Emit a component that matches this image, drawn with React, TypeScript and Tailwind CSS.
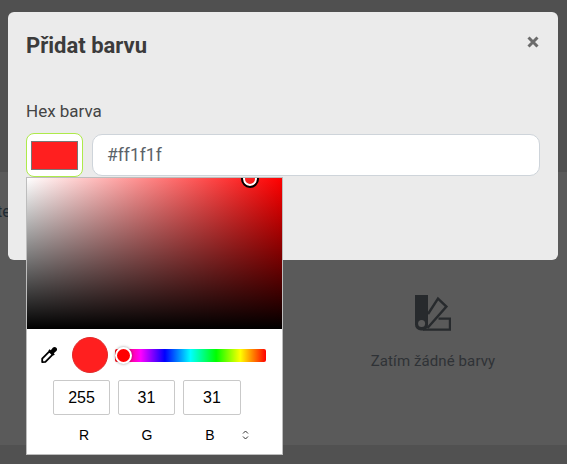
import * as React from 'react';

const SwatchIcon = () => (
    <svg width="36" height="36" viewBox="0 0 36 36" className="block">
        <path d="M0 0H13V29.5C13 33 10.5 35.5 7 35.5H6A6 6 0 0 1 0 29.5Z" fill="#272a2d" />
        <circle cx="6.6" cy="28.4" r="3.5" fill="#5a5a5a" />
        <path d="M13 19L23 3.6L31.4 11.6L12.5 33" fill="none" stroke="#272a2d" strokeWidth="2.4" />
        <path d="M23.5 23.6H35V34.6H8" fill="none" stroke="#272a2d" strokeWidth="2.4" />
    </svg>
);

const Eyedropper = () => (
    <svg width="18" height="18" viewBox="0 0 18 18" className="block">
        <path d="M2.2 12.6L9.4 5.4L12.6 8.6L5.4 15.8L2.2 16.2Z" fill="#fff" stroke="#000" strokeWidth="1.8" strokeLinejoin="round" />
        <path d="M8.4 4.4L9.6 3.2L10.8 4.2L13 1.6C14 .7 15.4.7 16.3 1.7C17.3 2.6 17.3 4 16.4 5L13.8 7.2L14.8 8.4L13.6 9.6Z" fill="#000" />
    </svg>
);

const ChannelBox = ({ value, className }: { value: string; className: string }) => (
    <div className={`h-[35px] flex items-center justify-center border border-[#c9c9c9] rounded-[2px] text-[16px] text-black ${className}`}>
        {value}
    </div>
);

const App: React.FC = () => {
    return (
        <div className="relative w-[567px] h-[464px] overflow-hidden flex flex-col bg-[#5a5a5a] font-['Roboto',sans-serif]">
            <div className="h-[172px] bg-[#505050]" />
            <div className="flex-1 flex">
                <div className="w-[283px] shrink-0 pt-[31px] text-[16px] leading-[18px] text-[#1f2a33] [text-indent:-3px]">te</div>
                <div className="w-[300px] shrink-0 flex flex-col items-center pt-[123px]">
                    <SwatchIcon />
                    <div className="mt-[20px] text-[15px] leading-[20px] text-[#2f3236] tracking-[0.1px]">Zatím žádné barvy</div>
                </div>
            </div>
            <div className="h-[19px] bg-[#515151]" />

            <div className="absolute left-[8px] top-[12px] w-[550px] h-[248px] rounded-[6px] bg-[#ebebeb] px-[18px]">
                <div className="flex items-center justify-between h-[66px]">
                    <h2 className="text-[22px] font-bold leading-[24px] pt-[1px] text-[#3b3b3b]">Přidat barvu</h2>
                    <svg width="12" height="12" viewBox="0 0 12 12" className="mr-[1px] mb-[6px]">
                        <path d="M1.5 1.5L10.5 10.5M10.5 1.5L1.5 10.5" stroke="#6b6b6b" strokeWidth="3" />
                    </svg>
                </div>
                <div className="mt-[23px] text-[17px] leading-[20px] text-[#444]">Hex barva</div>
                <div className="mt-[12px] flex items-center gap-[9px]">
                    <div className="w-[57px] h-[44px] rounded-[8px] border-[1.5px] border-[#aeea4a] bg-white flex items-center justify-center">
                        <div className="w-[47px] h-[29px] bg-[#ff1f1f] border border-[#777]" />
                    </div>
                    <div className="w-[448px] h-[42px] rounded-[10px] border border-[#ced4da] bg-white flex items-center pl-[14px] text-[17.5px] text-[#5b6268]">
                        #ff1f1f
                    </div>
                </div>
            </div>

            <div className="absolute left-[26px] top-[177px] w-[257px] h-[278px] bg-white border border-[#bdbdbd]">
                <div className="relative h-[151px] overflow-hidden bg-[linear-gradient(to_bottom,transparent,#000),linear-gradient(to_right,#fff,#ff0000)]">
                    <div className="absolute left-[216px] top-[-6px] w-[14px] h-[14px] rounded-full border-[2px] border-white outline-2 outline-black bg-transparent" />
                </div>
                <div className="flex items-center h-[51px] pt-[1px]">
                    <div className="ml-[13px]"><Eyedropper /></div>
                    <div className="ml-[14px] w-[36px] h-[36px] rounded-full bg-[#ff1f1f] border border-[#e02a2a]" />
                    <div className="relative ml-[7px] w-[151px] h-[13px] rounded-[2px] bg-[linear-gradient(to_right,#f00_0%,#f0f_17%,#00f_33%,#0ff_50%,#0f0_67%,#ff0_83%,#f00_100%)]">
                        <div className="absolute left-0 top-[-2px] w-[17px] h-[17px] rounded-full bg-[#ff0000] border-[2px] border-white shadow-[0_0_3px_rgba(0,0,0,0.4)]" />
                    </div>
                </div>
                <div className="font-['Liberation_Sans',sans-serif]">
                    <div className="flex pl-[26px] gap-[8px]">
                        <ChannelBox value="255" className="w-[57px]" />
                        <ChannelBox value="31" className="w-[57px]" />
                        <ChannelBox value="31" className="w-[58px]" />
                    </div>
                    <div className="relative mt-[12px] flex h-[16px] items-center text-[14px] text-black">
                        <span className="ml-[51px] w-[12px] text-center">R</span>
                        <span className="ml-[50px] w-[14px] text-center">G</span>
                        <span className="ml-[50px] w-[12px] text-center">B</span>
                        <svg width="7" height="10" viewBox="0 0 7 10" className="ml-[26px]">
                            <path d="M1 3.5L3.5 1L6 3.5M1 6.5L3.5 9L6 6.5" fill="none" stroke="#333" strokeWidth="1" />
                        </svg>
                    </div>
                </div>
            </div>
        </div>
    );
};

export default App;
